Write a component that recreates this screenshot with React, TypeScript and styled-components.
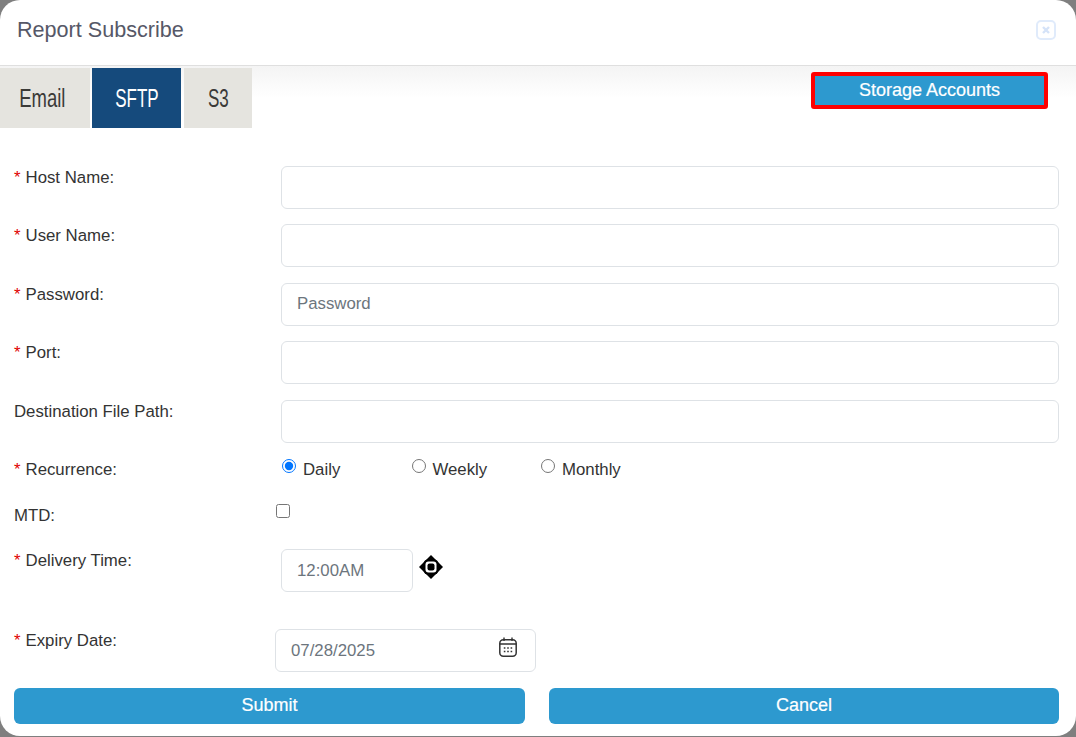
import React from "react";
import styled, { createGlobalStyle } from "styled-components";

const GlobalStyle = createGlobalStyle`
  html, body {
    margin: 0;
    padding: 0;
    background: #7f7f7f;
    font-family: "Liberation Sans", Arial, sans-serif;
  }
  * {
    box-sizing: border-box;
  }
`;

const SModal = styled.div`
  width: 1076px;
  height: 736px;
  background: #ffffff;
  border-radius: 20px;
  overflow: hidden;
`;

const SHeader = styled.div`
  height: 66px;
  padding: 0 20px 6px 17px;
  display: flex;
  align-items: center;
  justify-content: space-between;
  border-bottom: 1px solid #dfdfdf;
`;

const STitle = styled.h5`
  margin: 0;
  font-size: 21.6px;
  font-weight: 400;
  color: #565867;
`;

const SClose = styled.button`
  width: 20px;
  height: 20px;
  padding: 0;
  border: 2px solid #e0ebfb;
  border-radius: 5px;
  background: transparent;
  color: #d5e3f8;
  display: flex;
  align-items: center;
  justify-content: center;
`;

const STabBar = styled.div`
  height: 68px;
  padding-top: 2px;
  display: flex;
  justify-content: space-between;
  align-items: flex-start;
  background: linear-gradient(#f4f4f4 0, #ffffff 32px);
`;

const STabs = styled.div`
  display: flex;
`;

const STab = styled.div<{ $active?: boolean; $width: number; $gap: number; $inset?: number }>`
  width: ${(p) => p.$width}px;
  height: 60px;
  margin-right: ${(p) => p.$gap}px;
  padding-right: ${(p) => p.$inset ?? 0}px;
  display: flex;
  align-items: center;
  justify-content: center;
  background: ${(p) => (p.$active ? "#154a7c" : "#e5e4df")};
  color: ${(p) => (p.$active ? "#ffffff" : "#3a3a38")};
  font-size: 25px;
`;

/* no condensed face is installed, so squeeze the regular one */
const STabLabel = styled.span<{ $squeeze: number }>`
  display: inline-block;
  transform: scaleX(${(p) => p.$squeeze});
`;

const SStorageButton = styled.button`
  width: 237px;
  height: 37px;
  margin: 4px 28px 0 0;
  border: 4px solid #ff0000;
  border-radius: 3px;
  background: #2d99cf;
  color: #ffffff;
  font-family: inherit;
  font-size: 18px;
  -webkit-text-stroke: 0.2px #ffffff;
`;

const SForm = styled.form`
  padding: 32px 17px 0 14px;
`;

const SRow = styled.div<{ $height?: number }>`
  display: grid;
  grid-template-columns: 267px 1fr;
  min-height: ${(p) => p.$height ?? 43}px;
  margin-bottom: 15.4px;
`;

const SLabel = styled.label`
  padding-top: 2px;
  font-size: 16.8px;
  line-height: 19px;
  color: #333333;
`;

const SRequired = styled.span`
  color: #e00000;
  margin-right: 5px;
`;

const SInput = styled.input<{ $width?: number }>`
  display: block;
  width: ${(p) => (p.$width ? `${p.$width}px` : "100%")};
  height: 43px;
  padding: 0 15px;
  border: 1px solid #dee2e6;
  border-radius: 6px;
  background: #ffffff;
  font-family: inherit;
  font-size: 16.8px;
  color: #212529;
  &::placeholder {
    color: #6c757d;
    opacity: 1;
  }
`;

const SRadioGroup = styled.div`
  display: flex;
`;

const SRadioLabel = styled.label`
  width: 129.5px;
  display: flex;
  align-items: flex-start;
  gap: 7px;
  font-size: 16.8px;
  line-height: 24px;
  color: #333333;
`;

const SRadio = styled.input`
  width: 14px;
  height: 14px;
  margin: 1px 0 0 1px;
`;

const SCheckbox = styled.input`
  width: 14px;
  height: 14px;
  margin: 0 0 0 -5px;
`;

const STimeWrap = styled.div`
  display: flex;
  gap: 6px;
`;

const SMoveIcon = styled.svg`
  width: 24px;
  height: 24px;
  margin-top: 6px;
`;

const SDateWrap = styled.div`
  position: relative;
  width: 261px;
  margin-left: -6px;
`;

const SCalendar = styled.svg`
  position: absolute;
  top: 8px;
  right: 19px;
  width: 18px;
  height: 20px;
`;

const SActions = styled.div`
  display: grid;
  grid-template-columns: 511px 510px;
  column-gap: 24px;
`;

const SButton = styled.button`
  height: 36px;
  border: none;
  border-radius: 6px;
  background: #2d99cf;
  color: #ffffff;
  font-family: inherit;
  font-size: 18px;
  font-weight: 400;
  -webkit-text-stroke: 0.2px #ffffff;
`;

const Required: React.FC = () => <SRequired>*</SRequired>;

const App: React.FC = () => {
  return (
    <>
      <GlobalStyle />
      <SModal>
        <SHeader>
          <STitle>Report Subscribe</STitle>
          <SClose type="button" aria-label="Close">
            <svg width="12" height="12" viewBox="0 0 12 12">
              <path d="M3 3l6 6M9 3l-6 6" stroke="currentColor" strokeWidth="2.4" />
            </svg>
          </SClose>
        </SHeader>
        <STabBar>
          <STabs>
            <STab $width={90} $gap={2} $inset={6}><STabLabel $squeeze={0.74}>Email</STabLabel></STab>
            <STab $width={89} $gap={3} $active><STabLabel $squeeze={0.68}>SFTP</STabLabel></STab>
            <STab $width={68} $gap={0}><STabLabel $squeeze={0.68}>S3</STabLabel></STab>
          </STabs>
          <SStorageButton type="button">Storage Accounts</SStorageButton>
        </STabBar>
        <SForm>
          <SRow>
            <SLabel><Required />Host Name:</SLabel>
            <SInput />
          </SRow>
          <SRow>
            <SLabel><Required />User Name:</SLabel>
            <SInput />
          </SRow>
          <SRow>
            <SLabel><Required />Password:</SLabel>
            <SInput placeholder="Password" />
          </SRow>
          <SRow>
            <SLabel><Required />Port:</SLabel>
            <SInput />
          </SRow>
          <SRow>
            <SLabel>Destination File Path:</SLabel>
            <SInput />
          </SRow>
          <SRow $height={30.8}>
            <SLabel><Required />Recurrence:</SLabel>
            <SRadioGroup>
              <SRadioLabel><SRadio type="radio" name="recurrence" defaultChecked />Daily</SRadioLabel>
              <SRadioLabel><SRadio type="radio" name="recurrence" />Weekly</SRadioLabel>
              <SRadioLabel><SRadio type="radio" name="recurrence" />Monthly</SRadioLabel>
            </SRadioGroup>
          </SRow>
          <SRow $height={29.8}>
            <SLabel>MTD:</SLabel>
            <div><SCheckbox type="checkbox" /></div>
          </SRow>
          <SRow $height={64.4}>
            <SLabel><Required />Delivery Time:</SLabel>
            <STimeWrap>
              <SInput $width={132} placeholder="12:00AM" />
              <SMoveIcon viewBox="0 0 24 24">
                <path d="M12 0l12 12-12 12L0 12z" fill="#000000" />
                <rect x="4.5" y="4.5" width="15" height="15" rx="4.5" fill="#000000" />
                <rect x="6.5" y="6.5" width="11" height="11" rx="3" fill="#ffffff" />
                <rect x="8.5" y="8.5" width="7" height="7" rx="2" fill="#000000" />
              </SMoveIcon>
            </STimeWrap>
          </SRow>
          <SRow $height={43.2}>
            <SLabel><Required />Expiry Date:</SLabel>
            <SDateWrap>
              <SInput placeholder="07/28/2025" />
              <SCalendar viewBox="0 0 18 20" fill="none" stroke="#333333">
                <rect x="0.8" y="2.8" width="16.4" height="16.4" rx="3.5" strokeWidth="1.5" />
                <path d="M0.8 7h16.4M5 0.5v3.5M13 0.5v3.5" strokeWidth="1.4" />
                <path d="M4.8 11h1.6M8.2 11h1.6M11.6 11h1.6M4.8 14.5h1.6M8.2 14.5h1.6M11.6 14.5h1.6" strokeWidth="1.7" />
              </SCalendar>
            </SDateWrap>
          </SRow>
          <SActions>
            <SButton type="button">Submit</SButton>
            <SButton type="button">Cancel</SButton>
          </SActions>
        </SForm>
      </SModal>
    </>
  );
};

export default App;
